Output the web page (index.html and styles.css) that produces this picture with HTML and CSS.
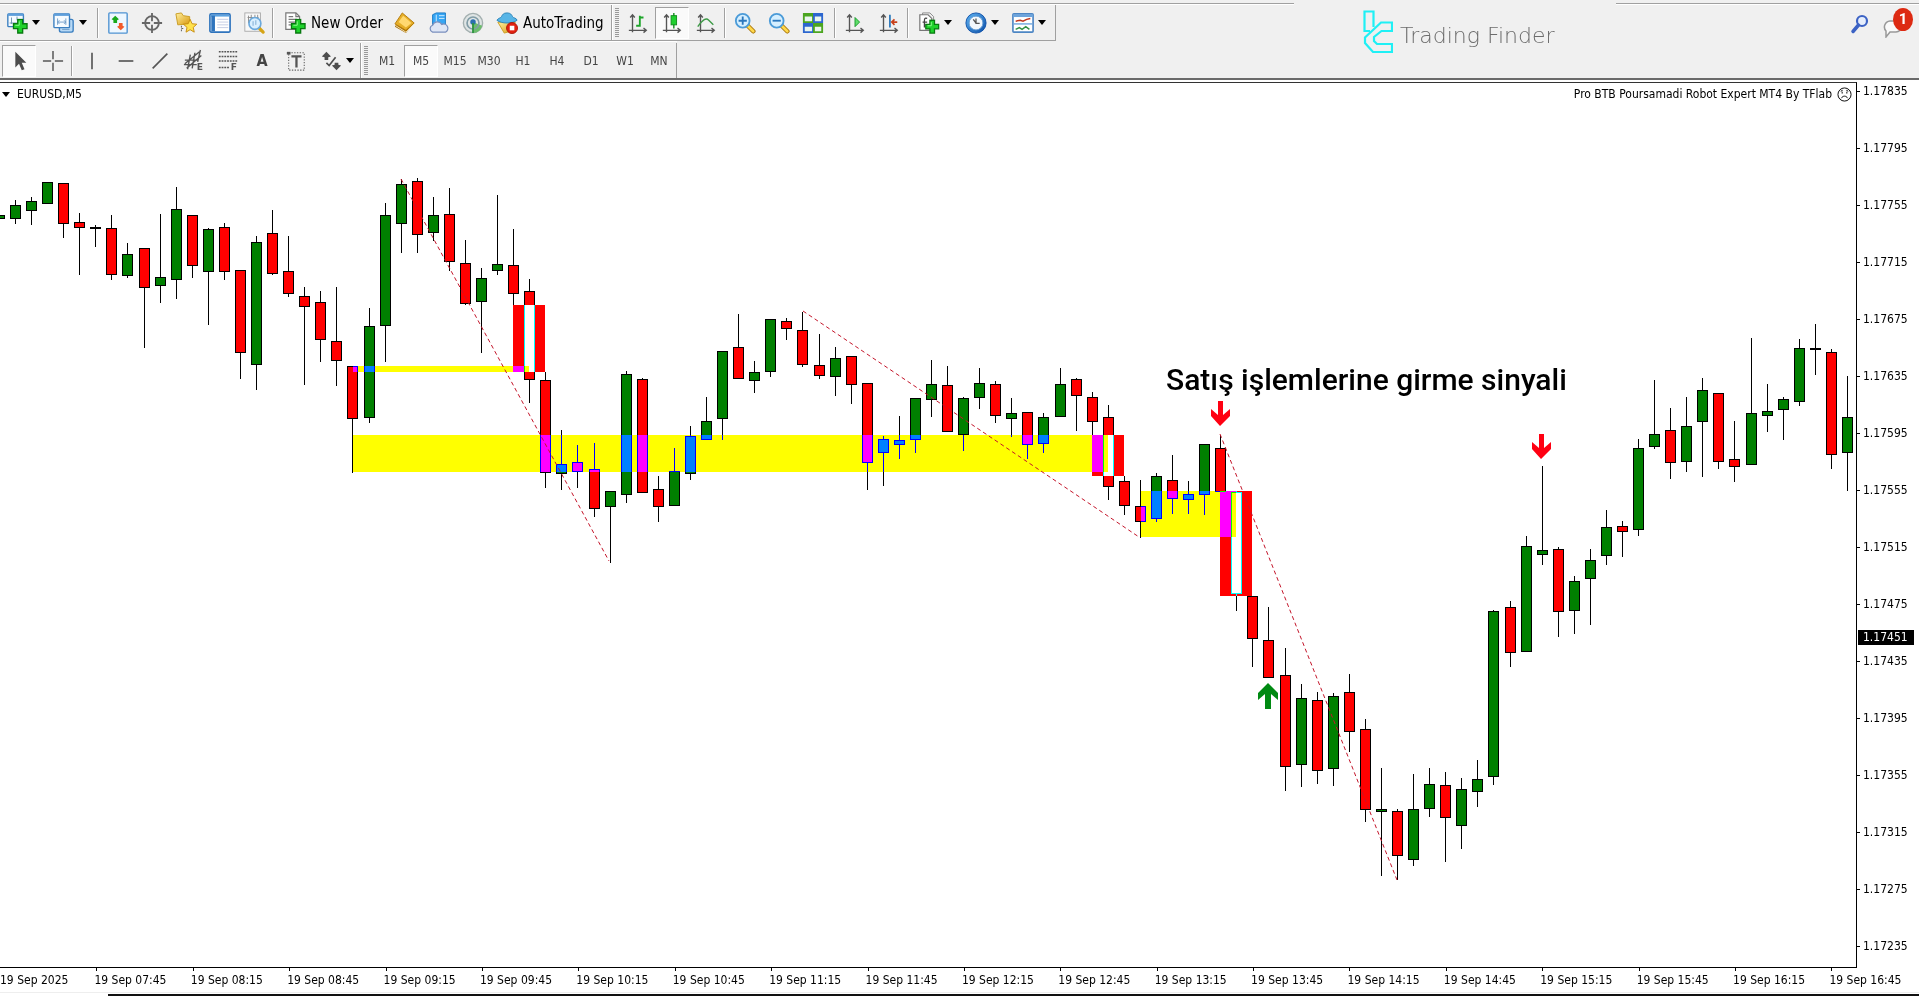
FILE: index.html
```html
<!DOCTYPE html>
<html lang="tr">
<head>
<meta charset="utf-8">
<title>EURUSD,M5</title>
<link rel="stylesheet" href="styles.css">
</head>
<body>
<svg class="defs" aria-hidden="true">
  <defs>
    <linearGradient id="gold" x1="0" y1="0" x2="1" y2="1"><stop offset="0" stop-color="#fff0a0"/><stop offset="1" stop-color="#d99a10"/></linearGradient>
    <linearGradient id="sky" x1="0" y1="0" x2="1" y2="1"><stop offset="0" stop-color="#ffffff"/><stop offset="1" stop-color="#9fd0f5"/></linearGradient>
    <linearGradient id="blue" x1="0" y1="0" x2="1" y2="1"><stop offset="0" stop-color="#5fb4f2"/><stop offset="1" stop-color="#0b4fa8"/></linearGradient>
    <symbol id="plus" viewBox="0 0 16 16"><path d="M5.500 1h5v4.500h4.500v5h-4.500v4.500h-5v-4.500h-4.500v-5h4.500z" fill="#1fd22b" stroke="#087a10" stroke-width="1.400"/><path d="M7 3v4H3" stroke="#8dff8d" fill="none"/></symbol>
    <symbol id="axes" viewBox="0 0 24 24"><path d="M6 3v19M2 20h19M3.500 6L6 3l2.500 3M18 17.500l3 2.500-3 2.500" fill="none" stroke="#555" stroke-width="1.500"/></symbol>
    <symbol id="lens" viewBox="0 0 24 24"><path d="M15 15l6 6" stroke="#a87408" stroke-width="5" stroke-linecap="round"/><path d="M15 15l6 6" stroke="#ffd84a" stroke-width="3" stroke-linecap="round"/><circle cx="9.500" cy="9.500" r="7.500" fill="#d5efff" stroke="#4b9bd8" stroke-width="2"/></symbol>
  </defs>
</svg>

<header class="header">
  <div class="toolbars">
    <div class="toolbar toolbar-main">
      <button class="split" aria-label="New chart"><svg class="icon" viewBox="0 0 24 24"><rect x="2" y="2" width="17" height="14" rx="1" fill="#f4faff" stroke="#3b7fc0" stroke-width="1.500"/><path d="M2 3h17" stroke="#5e9edb" stroke-width="2.500"/><path d="M6 6v7M4 12h9M12 5v4" stroke="#6d8fb0" fill="none"/><use href="#plus" x="7" y="7" width="17" height="17"/></svg><i class="caret"></i></button>
      <button class="split" aria-label="Profiles"><svg class="icon" viewBox="0 0 24 24"><rect x="7" y="8" width="15" height="14" rx="2" fill="#b8d9f5" stroke="#3b7fc0" stroke-width="1.500"/><rect x="1" y="2" width="17" height="15" rx="1" fill="#f6fbff" stroke="#3b7fc0" stroke-width="1.500"/><path d="M1 3h17" stroke="#5e9edb" stroke-width="2.500"/><path d="M5 7v7M5 11h9M14 7v7M7 9l-2 2 2 2M12 9l2 2-2 2M10 19h8" stroke="#6d9bc8" fill="none"/></svg><i class="caret"></i></button>
      <span class="sep"></span>
      <button class="tool" aria-label="Market Watch"><svg class="icon" viewBox="0 0 24 24"><rect x="2" y="1" width="20" height="22" rx="1" fill="#eef7ff" stroke="#4f93d2" stroke-width="1.500"/><path d="M9 4l4 4-2 1v3H7V9L5 8z" fill="#18a81c"/><path d="M15 20l-4-4 2-1v-3h4v3l2 1z" fill="#f25a2a"/></svg></button>
      <button class="tool" aria-label="Data Window"><svg class="icon" viewBox="0 0 24 24"><g fill="none" stroke="#666" stroke-width="2"><circle cx="12" cy="12" r="7.500"/><path d="M12 1v9M12 14v9M1 12h9M14 12h9"/></g></svg></button>
      <button class="tool" aria-label="Navigator"><svg class="icon" viewBox="0 0 24 24"><path d="M1 2l6-1 2 3 7 1v8l-13 1z" fill="url(#gold)" stroke="#c89a20"/><path d="M7 15v8M7 18h4" stroke="#555" stroke-dasharray="2 2"/><path d="M16.500 8l2.100 4.800 5.200.5-3.900 3.500 1.100 5.200-4.500-2.700L12 22l1.100-5.200-3.900-3.500 5.200-.5z" fill="#ffe24d" stroke="#c58a10"/></svg></button>
      <button class="tool" aria-label="Terminal"><svg class="icon" viewBox="0 0 24 24"><rect x="1" y="2" width="22" height="20" rx="1.500" fill="#fff" stroke="#2f74bd" stroke-width="1.800"/><path d="M2 4h20" stroke="#5ca2e0" stroke-width="2"/><path d="M4.500 4v17" stroke="#2f74bd" stroke-width="4"/><path d="M9 8h12M9 11h12M9 14h12M9 17h12" stroke="#c2cbe2"/></svg></button>
      <button class="tool" aria-label="Strategy Tester"><svg class="icon" viewBox="0 0 24 24"><rect x="2" y="1" width="17" height="20" fill="#f8f8f8" stroke="#a9a9a9"/><path d="M6 4v8M9 3v6M13 3v4M16 3v6M5 6h12" stroke="#888"/><path d="M18 18l4 4" stroke="#d6a416" stroke-width="3.500" stroke-linecap="round"/><circle cx="13" cy="12.500" r="6.500" fill="#d5edff" fill-opacity=".9" stroke="#6ba9dc" stroke-width="1.800"/><path d="M11 10v5M14 9v5" stroke="#79a7cf"/></svg></button>
      <span class="sep"></span>
      <button class="labelled new-order"><svg class="icon" viewBox="0 0 24 24"><path d="M2 1h11l4 4v14H2z" fill="#fff" stroke="#777" stroke-width="1.300"/><path d="M13 1v4h4M5 5h5M5 8h9M5 11h9M5 14h4" stroke="#777" fill="none" stroke-width="1.300"/><use href="#plus" x="7" y="7" width="17" height="17"/></svg><span>New Order</span></button>
      <button class="tool" aria-label="MetaEditor"><svg class="icon" viewBox="0 0 24 24"><path d="M1 16L9 2l13 10-9 11z" fill="#a86d05"/><path d="M1 13L9 1l13 11-9 8z" fill="#e5ae28" stroke="#b57b0b"/><path d="M5 11l5-7 9 8-6 5z" fill="#ffd870"/><path d="M2 15l11 7 9-9" stroke="#f6e9b8" fill="none"/></svg></button>
      <button class="tool" aria-label="Virtual hosting"><svg class="icon" viewBox="0 0 24 24"><path d="M5 3l4-2h10v13H5z" fill="#37a6f4" stroke="#1878c4"/><path d="M9 3v11M12 4h6M12 7h6" stroke="#d6f0ff"/><path d="M5 22a4 4 0 0 1 0-7.500 5.500 5.500 0 0 1 10-1 4.500 4.500 0 1 1 4 8.500z" fill="#dfe6f5" stroke="#7a8fbd" stroke-width="1.300"/></svg></button>
      <button class="tool" aria-label="Signals"><svg class="icon" viewBox="0 0 24 24"><circle cx="12" cy="12" r="10.500" fill="#dfe5e5" stroke="#a3afaf" stroke-width="1.500"/><path d="M12 11v12a11 11 0 0 0 10-8z" fill="#6cbd6c"/><circle cx="12" cy="12" r="6.500" fill="none" stroke="#819ca6" stroke-width="1.800"/><circle cx="12" cy="11" r="3" fill="#2a6fb0"/><path d="M12 12v11" stroke="#2e9340" stroke-width="2"/></svg></button>
      <button class="labelled auto-trading"><svg class="icon" viewBox="0 0 24 24"><path d="M2 11h19l-5 10-7 2z" fill="url(#gold)" stroke="#c99a1c"/><path d="M1 9c2-3 4-2 5-4s2-4 6-4 5 2 6 4 4 1 5 4c-5 4-17 4-22 0z" fill="#58b5e6" stroke="#2a82b8"/><circle cx="17.500" cy="17.500" r="6" fill="#e3200f" stroke="#a81508"/><rect x="15" y="15" width="5" height="5" fill="#fff"/></svg><span>AutoTrading</span></button>
      <span class="group-end"></span><span class="grip"></span>
      <button class="tool" aria-label="Bar chart"><svg class="icon" viewBox="0 0 24 24"><use href="#axes"/><path d="M14 4v12M14 6h4M10 15h4" stroke="#1ea52a" stroke-width="2"/></svg></button>
      <button class="tool pressed" aria-label="Candlesticks"><svg class="icon" viewBox="0 0 24 24"><use href="#axes"/><path d="M14 1v17" stroke="#108a1c" stroke-width="1.500"/><rect x="11" y="4" width="6" height="10" fill="#1fd02e" stroke="#108a1c"/></svg></button>
      <button class="tool" aria-label="Line chart"><svg class="icon" viewBox="0 0 24 24"><use href="#axes"/><path d="M3 16C9 8 12 6 15 9l5 5" fill="none" stroke="#3d9a46" stroke-width="1.500"/></svg></button>
      <span class="sep"></span>
      <button class="tool" aria-label="Zoom in"><svg class="icon" viewBox="0 0 24 24"><use href="#lens"/><path d="M5 9.500h9M9.500 5v9" stroke="#2a77bd" stroke-width="2"/></svg></button>
      <button class="tool" aria-label="Zoom out"><svg class="icon" viewBox="0 0 24 24"><use href="#lens"/><path d="M5 9.500h9" stroke="#2a77bd" stroke-width="2"/></svg></button>
      <button class="tool" aria-label="Tile windows"><svg class="icon" viewBox="0 0 24 24"><path d="M1 1h11v11H1zM12 12h11v11H12z" fill="#4ba51f"/><path d="M12 1h11v11H12zM1 12h11v11H1z" fill="#2c66cf"/><path d="M3 5h8v5H3zM14 5h7v5h-7zM3 16h8v5H3zM14 16h7v5h-7z" fill="#e9f5ee"/></svg></button>
      <span class="space"></span><span class="sep"></span>
      <button class="tool" aria-label="Auto scroll"><svg class="icon" viewBox="0 0 24 24"><use href="#axes"/><path d="M12 6v10l5-5z" fill="#5ede69" stroke="#17962a"/></svg></button>
      <button class="tool" aria-label="Chart shift"><svg class="icon" viewBox="0 0 24 24"><use href="#axes"/><path d="M13 3v14" stroke="#1f71b8" stroke-width="1.800"/><path d="M21 11h-6M18 8l-3 3 3 3" fill="none" stroke="#c8401a" stroke-width="1.800"/></svg></button>
      <span class="sep"></span><span class="space"></span>
      <button class="split" aria-label="Indicators"><svg class="icon" viewBox="0 0 24 24"><path d="M5 1h8l4 4v12H5z" fill="#eee" stroke="#888"/><path d="M2 3h9l4 4v13H2z" fill="#fff" stroke="#777" stroke-width="1.300"/><path d="M10 7c-3-1-3 1-3 3v7M5 11h5" fill="none" stroke="#444" stroke-width="1.400"/><use href="#plus" x="7" y="8" width="17" height="16"/></svg><i class="caret"></i></button>
      <button class="split" aria-label="Periods"><svg class="icon" viewBox="0 0 24 24"><circle cx="12" cy="12" r="11" fill="url(#blue)" stroke="#0b4fa8"/><circle cx="12" cy="12" r="7.500" fill="#f2f8fd" stroke="#6ba1d6"/><path d="M12 7v5.500h4M9 8l3 4" stroke="#555" fill="none" stroke-width="1.400"/></svg><i class="caret"></i></button>
      <button class="split" aria-label="Templates"><svg class="icon" viewBox="0 0 24 24"><rect x="1" y="2" width="22" height="20" rx="1" fill="#fff" stroke="#4d86c4" stroke-width="1.800"/><path d="M1 4h22" stroke="#6ca4dc" stroke-width="3"/><path d="M2 13h20" stroke="#6ca4dc" stroke-width="1.500"/><path d="M4 10l5-1 3 1 4-2 4-1" fill="none" stroke="#c0341c" stroke-width="1.600"/><path d="M4 19l4-2 3 2 4-3 4 3" fill="none" stroke="#329044" stroke-width="1.600"/></svg><i class="caret"></i></button>
      <span class="group-end last"></span>
    </div>
    <div class="toolbar toolbar-draw">
      <button class="tool pressed" aria-label="Cursor"><svg class="icon" viewBox="0 0 24 24"><path d="M8 2v17l4-4 3 7 3-1-3-7h5z" fill="#4d4d4d"/></svg></button>
      <button class="tool" aria-label="Crosshair"><svg class="icon" viewBox="0 0 24 24"><path d="M12 1v9M12 14v9M1 12h9M14 12h9" stroke="#555" stroke-width="1.600"/></svg></button>
      <span class="sep"></span>
      <button class="tool" aria-label="Vertical line"><svg class="icon" viewBox="0 0 24 24"><path d="M12 3v18" stroke="#555" stroke-width="1.800"/></svg></button>
      <button class="tool" aria-label="Horizontal line"><svg class="icon" viewBox="0 0 24 24"><path d="M4 12h16" stroke="#555" stroke-width="1.800"/></svg></button>
      <button class="tool" aria-label="Trendline"><svg class="icon" viewBox="0 0 24 24"><path d="M4 20L20 4" stroke="#555" stroke-width="1.800"/></svg></button>
      <button class="tool" aria-label="Equidistant channel"><svg class="icon" viewBox="0 0 24 24"><path d="M2 15L18 2M4 20L20 6M2 11h15M1 16h14M8 5L5 21M13 3l-3 17M19 0l-3 13" stroke="#555" stroke-width="1.500"/><text class="icon-letter" x="15" y="22">E</text></svg></button>
      <button class="tool" aria-label="Fibonacci"><svg class="icon" viewBox="0 0 24 24"><path d="M2 2h20M2 7h20M2 12h20M2 19h11" stroke="#555" stroke-width="1.600" stroke-dasharray="2 1"/><text class="icon-letter" x="15" y="22">F</text></svg></button>
      <button class="tool letter" aria-label="Text">A</button>
      <button class="tool" aria-label="Text label"><svg class="icon" viewBox="0 0 24 24"><rect x="4" y="3" width="17" height="19" fill="none" stroke="#666" stroke-width="1.200" stroke-dasharray="1.500 1.500"/><path d="M2 2h4v3H2z" fill="#555"/><path d="M7 7h11M12.500 7v12" stroke="#555" stroke-width="2.500"/></svg></button>
      <button class="split arrows" aria-label="Arrows"><svg class="icon" viewBox="0 0 24 24"><path d="M7 2l5 5-3 1v3H5V8L2 7zM18 22l-5-5 3-1v-2h4v2l3 1z" fill="#4d4d4d"/><path d="M7 14l3 3 7-9" fill="none" stroke="#4d4d4d" stroke-width="1.800"/></svg><i class="caret"></i></button>
      <span class="group-end"></span><span class="grip"></span>
      <button class="tool">M1</button><button class="tool pressed">M5</button><button class="tool">M15</button><button class="tool">M30</button><button class="tool">H1</button><button class="tool">H4</button><button class="tool">D1</button><button class="tool">W1</button><button class="tool">MN</button>
      <span class="group-end last"></span>
    </div>
  </div>
  <div class="brand">
    <svg class="brand-mark" viewBox="0 0 30 44" fill="none" stroke="#1ff0f5" stroke-width="2.200"><path d="M10.500 17V1.500h-9V21H7"/><path d="M29 12.500H18L2 27.500V33l8 9h19v-8H14l-3-3v-4l7.500-6H29z"/></svg>
    <span>Trading Finder</span>
  </div>
  <div class="account">
    <button class="account-button" aria-label="Search"><svg class="search" viewBox="0 0 20 20"><circle cx="12" cy="7" r="5" fill="#e6eefc" stroke="#3c62c4" stroke-width="2.200"/><path d="M8.500 11L3 17.500" stroke="#3c62c4" stroke-width="3.500" stroke-linecap="round"/></svg></button>
    <button class="account-button messages" aria-label="Messages"><svg class="bubble" viewBox="0 0 20 20"><path d="M8 3h6a5 5 0 0 1 0 11H8l-4 5v-6A6 6 0 0 1 8 3z" fill="#fafafa" stroke="#999" stroke-width="1.500"/></svg><span class="badge">1</span></button>
  </div>
</header>

<main class="workspace">
  <section class="chart">
    <h1 class="symbol"><i class="caret"></i>EURUSD,M5</h1>
    <p class="expert">Pro BTB Poursamadi Robot Expert MT4 By TFlab
      <svg class="face" viewBox="0 0 16 16" fill="none" stroke="#000"><circle cx="8" cy="8" r="7"/><path d="M4.500 12c2-3 5-3 7 0"/><path d="M5.500 5v2M10.500 5v2M4 4.500l2-1M12 4.500l-2-1"/></svg></p>
    <svg class="plot" viewBox="0 83 1856 884" preserveAspectRatio="none">
      <rect x="0" y="83" width="1856" height="884" fill="#fff"/>
      <g id="candles"></g>
      <g class="zones">
        <rect x="353" y="366" width="176" height="6"/>
        <rect x="353" y="435" width="755" height="37"/>
        <rect x="1141" y="491" width="95" height="46"/>
      </g>
      <g class="signals">
        <rect x="513" y="305" width="32" height="67"/>
        <rect x="1092" y="435" width="32" height="41"/>
        <rect x="1220" y="491" width="32" height="105"/>
      </g>
      <g class="trends">
        <path d="M401 179L609 561"/><path d="M803 311L1139 537"/><path d="M1220 434L1397 880"/>
      </g>
      <path class="sell" d="M1218 401h5v14l7-6v7l-10 10-9-10v-7l7 6z"/>
      <path class="sell" d="M1539 434h5v14l7-6v7l-10 10-9-10v-7l7 6z"/>
      <path class="buy" d="M1265 709h6v-15l7 6v-7l-10-10-10 10v7l7-6z"/>
      <text class="note" x="1166" y="390">Satış işlemlerine girme sinyali</text>
    </svg>
  </section>
  <aside class="prices">
    <span>1.17835</span><span>1.17795</span><span>1.17755</span><span>1.17715</span><span>1.17675</span><span>1.17635</span><span>1.17595</span><span>1.17555</span><span>1.17515</span><span>1.17475</span><span>1.17435</span><span>1.17395</span><span>1.17355</span><span>1.17315</span><span>1.17275</span><span>1.17235</span>
    <strong class="bid">1.17451</strong>
  </aside>
</main>
<footer class="times">
  <span>19 Sep 2025</span><span>19 Sep 07:45</span><span>19 Sep 08:15</span><span>19 Sep 08:45</span><span>19 Sep 09:15</span><span>19 Sep 09:45</span><span>19 Sep 10:15</span><span>19 Sep 10:45</span><span>19 Sep 11:15</span><span>19 Sep 11:45</span><span>19 Sep 12:15</span><span>19 Sep 12:45</span><span>19 Sep 13:15</span><span>19 Sep 13:45</span><span>19 Sep 14:15</span><span>19 Sep 14:45</span><span>19 Sep 15:15</span><span>19 Sep 15:45</span><span>19 Sep 16:15</span><span>19 Sep 16:45</span>
</footer>
<script src="chart.js"></script>
</body>
</html>
```
FILE: styles.css
```css
* { box-sizing: border-box; }

body {
  margin: 0;
  height: 100vh;
  display: grid;
  grid-template-rows: auto minmax(0, 1fr) auto;
  overflow: hidden;
  background: #fff;
  color: #000;
  font: 12px/16px "DejaVu Sans Condensed", "DejaVu Sans", sans-serif;
  font-stretch: condensed;
}

.defs { position: absolute; width: 0; height: 0; }

.header {
  display: flex;
  background: linear-gradient(#f0f0f0 3px, #a0a0a0 3px, #a0a0a0 4px, #fff 4px, #fff 5px, #f0f0f0 5px);
  border-bottom: 2px solid #6a6a6a;
  height: 80px;
}

.toolbars { padding-top: 5px; }

.toolbar {
  display: flex;
  align-items: center;
  height: 36px;
  width: max-content;
  padding-left: 2px;
}
.toolbar-main { border-bottom: 1px solid #a0a0a0; }
.toolbar-draw { height: 37px; padding-top: 1px; border-top: 1px solid #fff; }

button {
  display: flex;
  align-items: center;
  height: 32px;
  margin: 0;
  padding: 0;
  border: 0;
  background: none;
  color: #444;
  font: inherit;
}

.icon { flex: none; width: 22px; height: 22px; display: block; overflow: visible; }
.tool { width: 34px; justify-content: center; }
.pressed {
  background: #fafafa;
  border: 1px solid #fff;
  border-top-color: #a0a0a0;
  border-left-color: #a0a0a0;
}
.split { width: 47px; padding-left: 4px; gap: 4px; }
.arrows { padding-left: 7px; }
.labelled { color: #000; font-size: 15px; gap: 5px; padding-left: 8px; white-space: nowrap; }
.new-order { width: 112px; }
.auto-trading { width: 121px; padding-left: 6px; }
.letter { font-size: 16px; font-weight: bold; }
.icon-letter { font: bold 10px/12px "DejaVu Sans", sans-serif; fill: #555; }

.caret {
  flex: none;
  width: 0;
  height: 0;
  border: 4px solid transparent;
  border-top: 5px solid #000;
  border-bottom: 0;
}

.sep {
  width: 2px;
  height: 30px;
  margin: 0 2px 0 1px;
  border-left: 1px solid #a0a0a0;
  border-right: 1px solid #fff;
}
.space { width: 3px; }
.group-end { align-self: stretch; width: 2px; border-left: 1px solid #a0a0a0; border-right: 1px solid #fff; }
.grip {
  width: 4px;
  height: 30px;
  margin: 0 2px;
  background: repeating-linear-gradient(#999 0 1px, #f0f0f0 1px 2px);
}
.last { border-right: 0; width: 1px; }

.brand {
  display: flex;
  align-items: flex-start;
  gap: 7px;
  width: 322px;
  margin-left: auto;
  padding: 10px 0 0 69px;
  background: #f0f0f0;
  color: #6c6c6c;
  font: 200 22px/52px "DejaVu Sans", sans-serif;
  white-space: nowrap;
}
.brand-mark { width: 30px; height: 44px; }

.account {
  display: flex;
  justify-content: flex-end;
  align-items: flex-start;
  gap: 12px;
  width: 303px;
  padding: 12px 6px 0 0;
}
.account-button { position: relative; height: 24px; }
.search { width: 20px; height: 20px; }
.messages { width: 31px; }
.bubble { width: 20px; height: 20px; margin-top: 8px; }
.badge {
  position: absolute;
  top: -4px;
  right: 0;
  width: 20px;
  height: 23px;
  border-radius: 50%;
  background: #dd2a12;
  color: #fff;
  font: bold 15px/23px Roboto, sans-serif;
  text-align: center;
}

.workspace {
  display: grid;
  grid-template-columns: minmax(0, 1fr) 62px;
  min-height: 0;
  padding-top: 2px;
}

.chart {
  position: relative;
  min-height: 0;
  border-top: 1px solid #333;
  border-right: 1px solid #000;
}
.plot { display: block; width: 100%; height: 100%; }

.symbol, .expert {
  position: absolute;
  top: 3px;
  display: flex;
  align-items: center;
  margin: 0;
  font-size: 12px;
  font-weight: normal;
}
.symbol { left: 2px; gap: 7px; }
.expert { right: 4px; gap: 5px; }
.face { width: 15px; height: 15px; }

.zones { fill: #00f; }
.signals { fill: #0ff; }
.zones rect, .signals rect { mix-blend-mode: difference; }
.trends { fill: none; stroke: #c4152a; stroke-width: 1; stroke-dasharray: 4 3; }
.sell { fill: #ff0012; }
.buy { fill: #008a12; }
.note { font: 500 30px Roboto, sans-serif; }
.wick { stroke: #000; stroke-width: 1; }
.body { stroke: #000; stroke-width: 1; }
.up { fill: #008000; }
.down { fill: #f00; }

.prices {
  position: relative;
  display: flex;
  flex-direction: column;
  justify-content: space-between;
  padding: 1px 0 13px 6px;
}
.prices span { position: relative; }
.prices span::before {
  content: "";
  position: absolute;
  left: -6px;
  top: 8px;
  width: 3px;
  border-top: 1px solid #000;
}
.bid {
  position: absolute;
  top: 548px;
  left: 1px;
  right: 5px;
  padding-left: 5px;
  background: #000;
  color: #fff;
  font-weight: normal;
  line-height: 15px;
}

.times {
  display: flex;
  height: 29px;
  overflow: hidden;
  background: linear-gradient(90deg, #000, #000) 0 0 / calc(100% - 62px) 1px no-repeat,
    linear-gradient(#eee, #eee) 0 25px / 100% 1px no-repeat,
    linear-gradient(#111, #111) 108px 27px / 100% 2px no-repeat;
}
.times span {
  flex: 0 0 5.023%;
  position: relative;
  padding-top: 5px;
  text-indent: -2px;
  white-space: nowrap;
}
.times span:first-child { text-indent: 0; }
.times span:first-child::before { display: none; }
.times span::before {
  content: "";
  position: absolute;
  left: 0;
  top: 1px;
  height: 3px;
  border-left: 1px solid #000;
}
```
FILE: chart.js
```js
// Each candle: direction, high, body top, body bottom, low.
const candles = `
g 206 215 219 220|g 200 205 219 224|g 197 201 211 225|g 182 182 204 204|r 183 183 224 238
r 213 222 228 275|g 225 227 229 247|r 215 228 275 280|g 243 254 276 278|r 248 248 288 348
g 214 277 286 303|g 187 209 280 299|r 215 215 266 278|g 228 229 272 325|r 223 227 272 280
r 270 270 353 379|g 236 242 365 390|r 210 233 274 275|r 236 271 294 297|r 287 296 307 385
r 291 302 340 362|r 287 341 361 386|r 366 366 419 473|g 308 326 418 423|g 203 215 326 362
g 179 184 224 253|r 178 181 235 253|g 197 215 233 241|r 188 214 262 271|r 240 263 304 305
g 268 278 302 353|g 195 264 271 275|r 229 265 294 305|r 279 291 380 403|r 372 380 473 488
g 430 464 474 490|r 445 462 472 488|r 443 469 509 517|g 491 491 507 563|g 371 374 495 503
r 378 379 493 493|r 476 489 507 522|g 448 471 506 506|g 426 436 474 480|g 397 421 440 440
g 351 351 419 440|r 314 347 379 379|g 361 372 381 393|g 319 319 372 377|r 318 321 329 340
r 312 330 365 367|r 334 365 376 379|g 347 358 377 396|r 356 356 385 404|r 383 383 463 490
g 436 439 453 486|g 416 440 445 459|g 398 398 440 453|g 360 384 400 417|r 366 385 432 432
g 397 398 435 451|g 368 383 398 409|r 381 384 416 423|g 398 413 419 437|r 412 412 445 459
g 413 417 444 453|g 368 384 417 417|r 378 379 396 431|r 392 397 422 435|r 405 417 487 500
r 476 481 506 515|r 480 506 522 538|g 473 476 519 522|r 455 480 499 514|g 481 494 500 514
g 444 444 495 515|r 435 448 492 492|r 491 492 594 611|r 596 596 639 667|r 607 640 678 678
r 648 675 767 791|g 684 698 765 787|r 692 700 771 784|g 693 696 769 786|r 674 692 732 752
r 719 729 810 822|g 768 809 812 876|r 809 811 856 880|g 774 809 860 866|g 768 784 809 817
r 772 785 818 862|g 778 789 826 849|g 760 779 792 807|g 610 611 777 785|r 601 607 653 667
g 536 546 652 652|g 466 550 555 565|r 547 549 612 637|g 576 581 611 634|g 549 560 579 625
g 510 527 556 565|r 521 526 532 557|g 439 448 530 536|g 380 434 447 449|r 408 430 463 479
g 397 426 462 472|g 378 390 422 477|r 393 393 462 469|r 421 459 467 482|g 338 413 465 465
g 384 411 416 432|g 397 399 410 440|g 339 348 402 406|g 324 348 350 375|r 349 352 455 469
g 376 417 453 491`.trim().split(/[|\n]/);

const STEP = 16.07;
const layer = document.getElementById("candles");

function add(name, attributes) {
  const node = document.createElementNS("http://www.w3.org/2000/svg", name);
  for (const key in attributes) node.setAttribute(key, attributes[key]);
  layer.appendChild(node);
}

candles.forEach((line, index) => {
  const [side, ...levels] = line.split(" ");
  const [high, top, bottom, low] = levels.map(Number);
  const x = Math.round(15 + (index - 1) * STEP) + 0.5;
  add("path", { class: "wick", d: `M${x} ${high}V${low}` });
  add("rect", {
    class: "body " + (side === "g" ? "up" : "down"),
    x: x - 5, y: top + 0.5, width: 10, height: bottom - top - 1
  });
});
```
